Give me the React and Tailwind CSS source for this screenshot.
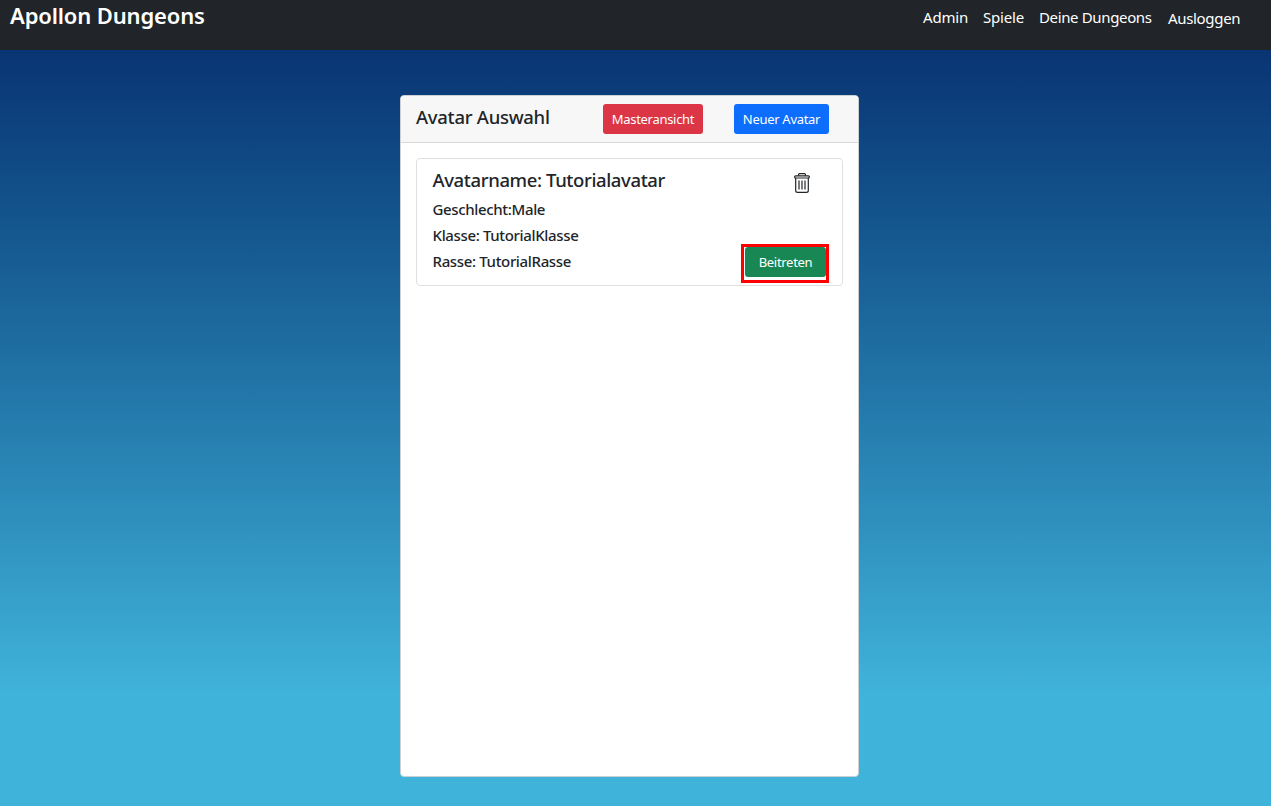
import React from 'react';

function TrashIcon() {
  return (
    <svg className="h-5 w-4" viewBox="0 0 16 20" fill="none" stroke="#212529" strokeWidth="1.2">
      <path d="M4.6 2.8V1.5q0-.9.9-.9h5q.9 0 .9.9v1.3" />
      <rect x=".6" y="2.9" width="14.8" height="2.1" rx="1" />
      <path d="M1.7 5v12.5q0 1.9 1.9 1.9h8.8q1.9 0 1.9-1.9V5" />
      <path d="M5 7.5v9M8 7.5v9M11 7.5v9" />
    </svg>
  );
}

const links = [
  { label: 'Admin', cls: 'w-[45px] tracking-[-0.2px]' },
  { label: 'Spiele', cls: 'ml-[15px] w-[41px] tracking-[-0.2px]' },
  { label: 'Deine Dungeons', cls: 'ml-[15px] w-[113px] tracking-[-0.36px]' },
  { label: 'Ausloggen', cls: 'ml-4 w-[73px] pt-px tracking-[-0.33px]' },
];

export default function App() {
  return (
    <div className="flex h-[806px] w-[1271px] flex-col bg-linear-to-b from-[#082b6b] to-[#40b3da] to-86% font-['Noto_Sans',sans-serif] text-[#212529]">
      <nav className="flex h-[50px] shrink-0 justify-between bg-[#212529] pr-[30px] pl-2.5 text-white">
        <span className="text-[22px] leading-[30px] font-semibold tracking-[-0.15px]">Apollon Dungeons</span>
        <div className="flex pt-[5px] text-[15px] leading-6">
          {links.map((l) => <a key={l.label} className={`whitespace-nowrap ${l.cls}`}>{l.label}</a>)}
        </div>
      </nav>
      <main className="mt-[45px] ml-[400px] h-[682px] w-[459px] overflow-hidden rounded border border-[#cbd0d5] bg-white">
        <header className="flex h-[47px] border-b border-[#d8d8d8] bg-[#f7f7f7] pt-2 pl-[15px]">
          <h1 className="w-[187px] text-[18.5px] leading-[26px] font-medium tracking-[-0.28px]">Avatar Auswahl</h1>
          <button className="h-[30px] w-[100px] rounded-[3px] bg-[#dc3545] pt-0.5 text-[13px] tracking-[-0.3px] text-white">Masteransicht</button>
          <button className="ml-[31px] h-[30px] w-[95px] rounded-[3px] bg-[#0d6efd] pt-0.5 text-[13px] tracking-[-0.3px] text-white">Neuer Avatar</button>
        </header>
        <section className="mt-[15px] ml-[15px] flex h-[128px] w-[427px] justify-between rounded border border-[#dfdfdf] pl-[15.5px]">
          <div className="pt-2 text-[15px] leading-[26px] font-medium tracking-[-0.35px]">
            <h2 className="mb-[3px] text-[18.5px] tracking-[-0.38px]">Avatarname: Tutorialavatar</h2>
            <p>Geschlecht:Male</p>
            <p>Klasse: TutorialKlasse</p>
            <p>Rasse: TutorialRasse</p>
          </div>
          <div className="mr-[13px] flex flex-col items-end justify-between pt-3.5 pb-0.5">
            <button className="mr-[19px]"><TrashIcon /></button>
            <div className="h-[39px] w-[88px] border-3 border-[#f00] pl-px">
              <button className="h-[30px] w-full rounded-[3px] bg-[#198754] pt-0.5 text-[13px] tracking-[-0.3px] text-white">Beitreten</button>
            </div>
          </div>
        </section>
      </main>
    </div>
  );
}
